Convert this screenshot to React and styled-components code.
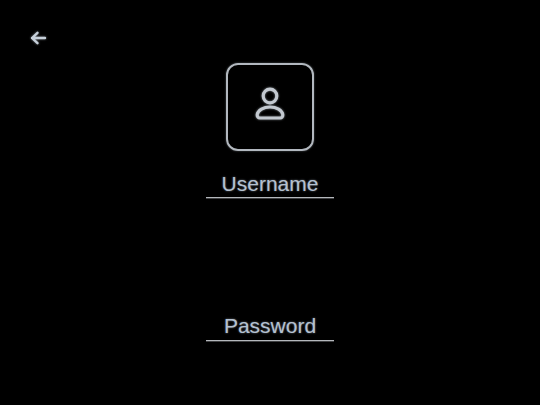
import React from "react";
import styled, { createGlobalStyle } from "styled-components";

const Global = createGlobalStyle`
  html, body { margin: 0; padding: 0; background: #000; }
  body { font-family: "Liberation Sans", Arial, sans-serif; }
`;

const Screen = styled.div`
  position: relative;
  width: 540px;
  height: 405px;
  background: #000;
  overflow: hidden;
  display: flex;
  flex-direction: column;
  align-items: center;
  padding-top: 63px;
  box-sizing: border-box;
`;

const BackButton = styled.button`
  position: absolute;
  left: 29px;
  top: 29px;
  width: 18px;
  height: 18px;
  padding: 0;
  border: 0;
  background: none;
  display: flex;
`;

const Avatar = styled.div`
  width: 88px;
  height: 88px;
  box-sizing: border-box;
  border: 2px solid #b2b8bf;
  border-radius: 12px;
  display: flex;
  align-items: center;
  justify-content: center;
  box-shadow: 0 0 2px rgba(200, 210, 220, 0.45);
`;

const Field = styled.div`
  width: 128px;
  height: ${(p) => p.$height}px;
  box-sizing: border-box;
  margin-top: ${(p) => p.$top}px;
  padding-bottom: ${(p) => p.$lift}px;
  border-bottom: 1px solid #b4b8bc;
  box-shadow: 0 1px 0 rgba(180, 184, 188, 0.35);
  display: flex;
  align-items: flex-end;
  justify-content: center;
  color: #b4c1d1;
  font-size: 21px;
  line-height: 26px;
  text-shadow: 0 0 2px rgba(185, 198, 214, 0.6);
`;

const Glow = styled.svg`
  display: block;
  filter: drop-shadow(0 0 1px rgba(210, 220, 230, 0.55));
`;

export default function App() {
  return (
    <Screen>
      <Global />
      <BackButton aria-label="Back">
        <Glow width="18" height="18" viewBox="0 0 18 18" fill="none" stroke="#c6d0da" strokeWidth="2.4" strokeLinecap="round" strokeLinejoin="round">
          <path d="M16 9H3M8.500 3.800 3 9l5.500 5.200" />
        </Glow>
      </BackButton>
      <Avatar>
        <Glow width="32" height="40" viewBox="0 0 32 40" fill="none" stroke="#c3c9d0" strokeWidth="3.200" strokeLinejoin="round">
          <circle cx="16" cy="9" r="6.800" />
          <path d="M6 31h20a3 3 0 0 0 2.800-3.500C28 23 22.500 20 16 20S4 23 3.200 27.500A3 3 0 0 0 6 31z" />
        </Glow>
      </Avatar>
      <Field $top={20} $height={27} $lift={0}>Username</Field>
      <Field $top={115} $height={28} $lift={1}>Password</Field>
    </Screen>
  );
}
